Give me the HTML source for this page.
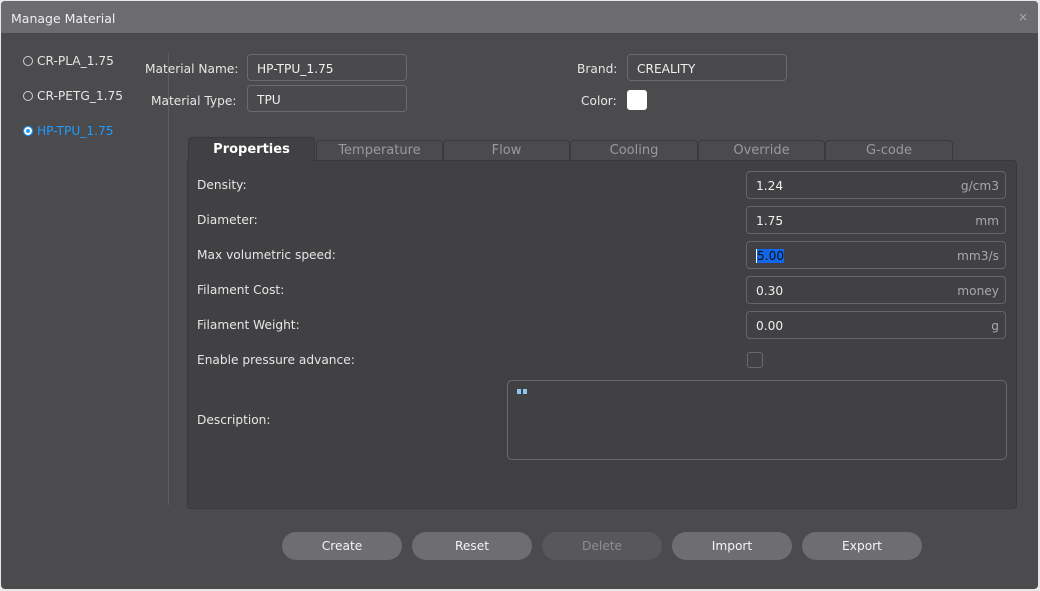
<!DOCTYPE html>
<html><head><meta charset="utf-8"><style>
*{box-sizing:border-box;margin:0;padding:0}
body{width:1040px;height:591px;background:#e8e8e8;font-family:"DejaVu Sans","Liberation Sans",sans-serif;font-size:12.2px;color:#e6e6e6;position:relative;overflow:hidden}
.win{position:absolute;left:1px;top:1px;width:1037px;height:588px;background:#4b4b4d;border-radius:4px;overflow:hidden}
.title{position:absolute;left:0;top:0;right:0;height:32px;background:#6c6b6f;}
.title span{position:absolute;left:10px;top:10px;font-size:12.5px;color:#f0f0f0}
.a{position:absolute;white-space:nowrap}
.in{position:absolute;border:1px solid #6a6a6c;border-radius:4px;background:#4a4a4c}
.in span{position:absolute;left:9px;top:7px;color:#f0f0f0}
.radio{position:absolute;width:10px;height:10px;border:1px solid #cfcfcf;border-radius:50%}
.tab{position:absolute;top:140px;height:20px;background:#4b4b4d;border:1px solid #3a3a3c;border-bottom:none;border-radius:4px 4px 0 0;color:#9a9a9c;text-align:center;line-height:19px;font-size:13px}
.panel{position:absolute;left:187px;top:160px;width:830px;height:349px;background:#414143;border:1px solid #38383a;border-radius:0 4px 4px 4px}
.f{position:absolute;left:746px;width:260px;height:28px;border:1px solid #666668;border-radius:4px;background:#414143}
.f .v{position:absolute;left:9px;top:7px;color:#f0f0f0}
.f .u{position:absolute;right:6px;top:7px;color:#a8a8aa}
.lbl{position:absolute;left:197px}
.btn{position:absolute;top:532px;width:120px;height:28px;border-radius:14px;background:#6e6d71;color:#f4f4f4;text-align:center;line-height:29px}
</style></head><body>
<div class="win">
<div class="title"><span>Manage Material</span><span style="left:auto;right:10px;top:9px;color:#aaa;font-size:12px">×</span></div>
</div>
<div class="radio" style="left:23px;top:56px"></div><div class="a" style="left:37px;top:54px">CR-PLA_1.75</div>
<div class="radio" style="left:23px;top:91px"></div><div class="a" style="left:37px;top:89px">CR-PETG_1.75</div>
<div class="radio" style="left:23px;top:126px;border-color:#1e9bff;background:#1e9bff;box-shadow:inset 0 0 0 2px #fff"></div><div class="a" style="left:37px;top:124px;color:#1e9bff">HP-TPU_1.75</div>
<div class="a" style="left:168px;top:53px;width:1px;height:452px;background:#5e5e60"></div>
<div class="a" style="left:145px;top:62px">Material Name:</div>
<div class="in" style="left:247px;top:54px;width:160px;height:27px"><span>HP-TPU_1.75</span></div>
<div class="a" style="left:151px;top:94px">Material Type:</div>
<div class="in" style="left:247px;top:85px;width:160px;height:27px"><span>TPU</span></div>
<div class="a" style="left:577px;top:62px">Brand:</div>
<div class="in" style="left:627px;top:54px;width:160px;height:27px"><span>CREALITY</span></div>
<div class="a" style="left:581px;top:94px">Color:</div>
<div class="a" style="left:627px;top:90px;width:20px;height:20px;background:#fff;border-radius:3px"></div>
<div class="panel"></div>
<div class="tab" style="left:188px;top:137px;width:127px;height:24px;background:#414143;color:#fff;font-weight:bold;line-height:23px;z-index:2;border-color:#38383a">Properties</div>
<div class="tab" style="left:316px;width:127px">Temperature</div>
<div class="tab" style="left:443px;width:127px">Flow</div>
<div class="tab" style="left:570px;width:128px">Cooling</div>
<div class="tab" style="left:698px;width:127px">Override</div>
<div class="tab" style="left:825px;width:128px">G-code</div>
<div class="lbl a" style="top:178px">Density:</div>
<div class="f" style="top:171px"><span class="v">1.24</span><span class="u">g/cm3</span></div>
<div class="lbl a" style="top:213px">Diameter:</div>
<div class="f" style="top:206px"><span class="v">1.75</span><span class="u">mm</span></div>
<div class="lbl a" style="top:248px">Max volumetric speed:</div>
<div class="f" style="top:241px"><span class="v" style="background:#1167e8;color:#111;border-left:1px solid #fff">5.00</span><span class="u">mm3/s</span></div>
<div class="lbl a" style="top:283px">Filament Cost:</div>
<div class="f" style="top:276px"><span class="v">0.30</span><span class="u">money</span></div>
<div class="lbl a" style="top:318px">Filament Weight:</div>
<div class="f" style="top:311px"><span class="v">0.00</span><span class="u">g</span></div>
<div class="lbl a" style="top:353px">Enable pressure advance:</div>
<div class="a" style="left:747px;top:352px;width:16px;height:16px;border:1px solid #6a6a6c;border-radius:3px"></div>
<div class="lbl a" style="top:413px">Description:</div>
<div class="a" style="left:507px;top:380px;width:500px;height:80px;border:1px solid #6a6a6c;border-radius:5px"></div>
<div class="a" style="left:517px;top:389px;width:4px;height:5px;background:#8ec4ee"></div>
<div class="a" style="left:523px;top:389px;width:4px;height:5px;background:#8ec4ee"></div>
<div class="btn" style="left:282px">Create</div>
<div class="btn" style="left:412px">Reset</div>
<div class="btn" style="left:542px;background:#58585a;color:#8e8e90">Delete</div>
<div class="btn" style="left:672px">Import</div>
<div class="btn" style="left:802px">Export</div>
</body></html>
